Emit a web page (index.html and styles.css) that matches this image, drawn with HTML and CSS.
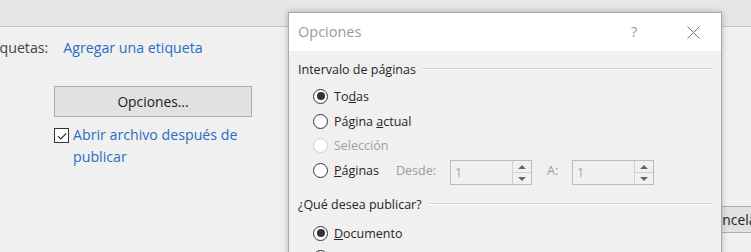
FILE: index.html
```html
<!DOCTYPE html>
<html lang="es">
<head>
  <meta charset="UTF-8" />
  <title>Opciones</title>
  <link rel="stylesheet" href="styles.css">
</head>
<body>
  <div class="topbar"></div>

  <div class="page">
    <div class="left-panel">
      <div class="tags-row">
        <span class="tags-label">Etiquetas:</span>
        <a class="link" href="#">Agregar una etiqueta</a>
      </div>
      <div class="options-block">
        <button class="btn">Opciones...</button>
        <label class="check-row">
          <span class="checkbox">
            <svg width="12" height="12" viewBox="0 0 12 12"><path d="M2 6.2 L4.8 9 L10.2 3.4" fill="none" stroke="#222" stroke-width="1.1"/></svg>
          </span>
          <span class="link">Abrir archivo después de publicar</span>
        </label>
      </div>
    </div>
    <div class="right-panel">
      <button class="btn cancel">Cancelar</button>
    </div>
  </div>

  <div class="dialog">
    <div class="dialog-title">
      <span class="title-text">Opciones</span>
      <span class="help">?</span>
      <span class="close">
        <svg width="13" height="13" viewBox="0 0 13 13"><path d="M0.5 0.5 L12.5 12.5 M12.5 0.5 L0.5 12.5" stroke="#777" stroke-width="1"/></svg>
      </span>
    </div>
    <div class="dialog-body">
      <div class="group-head"><span>Intervalo de páginas</span><span class="rule"></span></div>
      <div class="radio-list">
        <div class="radio-row"><span class="radio checked"></span><span>To<u>d</u>as</span></div>
        <div class="radio-row"><span class="radio"></span><span>Página <u>a</u>ctual</span></div>
        <div class="radio-row disabled"><span class="radio"></span><span>Selección</span></div>
        <div class="radio-row">
          <span class="radio"></span><span class="pages-label"><u>P</u>áginas</span>
          <span class="muted from-label">Desde:</span>
          <span class="spin">
            <span class="spin-value">1</span>
            <span class="spin-btns"><span class="arrow up"></span><span class="arrow down"></span></span>
          </span>
          <span class="muted to-label">A:</span>
          <span class="spin">
            <span class="spin-value">1</span>
            <span class="spin-btns"><span class="arrow up"></span><span class="arrow down"></span></span>
          </span>
        </div>
      </div>
      <div class="group-head second"><span>¿Qué desea publicar?</span><span class="rule"></span></div>
      <div class="radio-list second">
        <div class="radio-row"><span class="radio checked"></span><span><u>D</u>ocumento</span></div>
        <div class="radio-row"><span class="radio"></span><span>Documento con marcas</span></div>
      </div>
    </div>
  </div>
</body>
</html>
```

FILE: styles.css
```css
* {
  box-sizing: border-box;
  margin: 0;
  padding: 0;
}

body {
  width: 751px;
  height: 252px;
  overflow: hidden;
  position: relative;
  background: #f0f0f0;
  font-family: 'Open Sans', 'Noto Sans', sans-serif;
  font-size: 12.5px;
  color: #262626;
}

.topbar {
  height: 27px;
  background: #e6e6e6;
  border-bottom: 1px solid #c6c6c6;
}

.page {
  display: flex;
  font-size: 14.2px;
}

.left-panel {
  flex: none;
  width: 280px;
  padding-top: 11px;
}

.tags-row {
  display: flex;
  gap: 15px;
  margin-left: -17px;
  line-height: 20px;
}

.tags-label {
  color: #444;
}

.link {
  color: #2b6cc0;
  text-decoration: none;
}

.options-block {
  margin: 28px 0 0 54px;
  width: 198px;
}

.btn {
  font: inherit;
  font-size: 13.8px;
  color: #222;
  background: #e1e1e1;
  border: 1px solid #adadad;
  height: 31px;
  width: 198px;
}

.check-row {
  display: flex;
  gap: 4px;
  margin-top: 7px;
  line-height: 22px;
}

.checkbox {
  flex: none;
  width: 15px;
  height: 15px;
  margin-top: 4px;
  border: 1px solid #333;
  background: #fff;
  display: flex;
  align-items: center;
  justify-content: center;
}

.right-panel {
  flex: none;
  padding: 179px 0 0 404px;
}

.btn.cancel {
  width: 100px;
  height: 27px;
}

/* dialog sits over the page */
.dialog {
  position: absolute;
  left: 288px;
  top: 12px;
  width: 434px;
  height: 260px;
  background: #f0f0f0;
  border: 1px solid #a9a9a9;
  box-shadow: 0 0 6px rgba(0, 0, 0, 0.25);
}

.dialog-title {
  height: 38px;
  background: #fff;
  display: flex;
  align-items: center;
  padding-left: 9px;
  padding-bottom: 2px;
}

.title-text {
  flex: 1;
  font-size: 14.5px;
  color: #9a9a9a;
}

.help {
  font-size: 15px;
  color: #999;
  width: 56px;
}

.close {
  width: 34px;
  display: flex;
  padding-top: 2px;
}

.dialog-body {
  padding: 9px 9px 0 9px;
}

.group-head {
  display: flex;
  align-items: center;
  gap: 6px;
  line-height: 20px;
}

.group-head.second {
  margin-top: 12px;
}

.rule {
  flex: 1;
  height: 2px;
  border-top: 1px solid #d5d5d5;
  border-bottom: 1px solid #fff;
  margin-top: -2px;
}

.radio-list {
  padding: 4px 0 0 15px;
}

.radio-list.second {
  padding-top: 6px;
}

.radio-row {
  display: flex;
  align-items: center;
  gap: 6px;
  height: 24.7px;
}

.radio {
  flex: none;
  width: 15px;
  height: 15px;
  border: 1px solid #333;
  border-radius: 50%;
  background: #fff;
  display: flex;
  align-items: center;
  justify-content: center;
}

.radio.checked::after {
  content: "";
  width: 8px;
  height: 8px;
  border-radius: 50%;
  background: #333;
}

.radio-row.disabled {
  color: #a0a0a0;
}

.radio-row.disabled .radio {
  border-color: #cfcfcf;
}

.muted {
  color: #9a9a9a;
}

.pages-label {
  width: 56px;
}

.from-label {
  width: 48px;
}

.to-label {
  margin-left: 9px;
  width: 19px;
}

.spin {
  display: flex;
  width: 82px;
  height: 25px;
  border: 1px solid #bcbcbc;
  background: #f0f0f0;
  margin-top: 5px;
}

.spin-value {
  flex: 1;
  padding-left: 4px;
  line-height: 23px;
  color: #a8a8a8;
}

.spin-btns {
  width: 19px;
  border-left: 1px solid #d0d0d0;
  display: flex;
  flex-direction: column;
}

.arrow {
  flex: 1;
  display: flex;
  align-items: center;
  justify-content: center;
}

.arrow.up {
  border-bottom: 1px solid #d0d0d0;
}

.arrow.up::after {
  content: "";
  border: 4px solid transparent;
  border-bottom: 4px solid #666;
  border-top: 0;
}

.arrow.down::after {
  content: "";
  border: 4px solid transparent;
  border-top: 4px solid #666;
  border-bottom: 0;
}
```
